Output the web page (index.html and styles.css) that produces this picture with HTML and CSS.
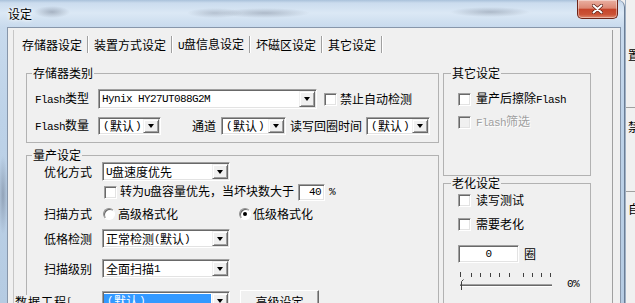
FILE: index.html
```html
<!doctype html>
<html>
    <head>
        <meta charset=utf-8>
        <title>设定</title>
        <link rel="stylesheet" href="styles.css">
    </head>
    <body>
        <div class="screen">
            <div class="dlg">
                <div class="titlebar">
                    <span class="title">设定</span>
                    <span class="close">
                        <svg width="11" height="10" viewBox="0 0 11 10">
                            <path d="M1.5 1.5L9.5 8.5M9.5 1.5L1.5 8.5" stroke="#5a1a10" stroke-width="3.4" stroke-linecap="round"/>
                            <path d="M1.5 1.5L9.5 8.5M9.5 1.5L1.5 8.5" stroke="#fff" stroke-width="2" stroke-linecap="round"/>
                        </svg>
                    </span>
                </div>
                <div class="client">
                    <div class="tabctl">
                        <div class="tabs">
                            <span class="tab on">存储器设定</span><span class="sep"></span>
                            <span class="tab">装置方式设定</span><span class="sep"></span>
                            <span class="tab"><span class="en">U</span>盘信息设定</span><span class="sep"></span>
                            <span class="tab">坏磁区设定</span><span class="sep"></span>
                            <span class="tab">其它设定</span><span class="sep"></span>
                        </div>
                        <div class="pages">
                            <div class="col col-l">
                                <fieldset class="grp grp-type">
                                    <legend>存储器类别</legend>
                                    <div class="gbody">
                                        <div class="row r-flash">
                                            <span class="lbl lbl-type"><span class="en">Flash</span>类型</span>
                                            <span class="combo c-type"><span class="val en">Hynix HY27UT088G2M</span><span class="drop"></span></span>
                                            <span class="cb cb-auto"></span><span class="cbt">禁止自动检测</span>
                                        </div>
                                        <div class="row r-count">
                                            <span class="lbl lbl-type"><span class="en">Flash</span>数量</span>
                                            <span class="combo c-def"><span class="val"><span class="en par">(</span>默认<span class="en par">)</span></span><span class="drop"></span></span>
                                            <span class="lbl lbl-ch">通道</span>
                                            <span class="combo c-ch"><span class="val"><span class="en par">(</span>默认<span class="en par">)</span></span><span class="drop"></span></span>
                                            <span class="lbl lbl-rw">读写回圈时间</span>
                                            <span class="combo c-rw"><span class="val"><span class="en par">(</span>默认<span class="en par">)</span></span><span class="drop"></span></span>
                                        </div>
                                    </div>
                                </fieldset>
                                <fieldset class="grp grp-prod">
                                    <legend>量产设定</legend>
                                    <div class="gbody">
                                        <div class="row r-a">
                                            <span class="lbl lbl-p">优化方式</span>
                                            <span class="combo c-p"><span class="val"><span class="en">U</span>盘速度优先</span><span class="drop"></span></span>
                                        </div>
                                        <div class="row r-b">
                                            <span class="cb cb-cap"></span><span class="cbt">转为<span class="en">U</span>盘容量优先，当坏块数大于</span>
                                            <span class="edit edit-40 en">40</span>
                                            <span class="pct-sign en">%</span>
                                        </div>
                                        <div class="row r-c">
                                            <span class="lbl lbl-p">扫描方式</span>
                                            <span class="rb rb-hi"></span><span class="cbt">高级格式化</span>
                                            <span class="rb rb-lo on"></span><span class="cbt rbt-lo">低级格式化</span>
                                        </div>
                                        <div class="row r-d">
                                            <span class="lbl lbl-p">低格检测</span>
                                            <span class="combo c-p"><span class="val">正常检测<span class="en">(</span>默认<span class="en">)</span></span><span class="drop"></span></span>
                                        </div>
                                        <div class="row r-e">
                                            <span class="lbl lbl-p">扫描级别</span>
                                            <span class="combo c-p"><span class="val">全面扫描<span class="en">1</span></span><span class="drop"></span></span>
                                        </div>
                                        <div class="row r-f">
                                            <span class="lbl lbl-glitch">数据工程[—</span>
                                            <span class="combo c-p c-sel"><span class="val"><span class="en par">(</span>默认<span class="en par">)</span></span><span class="drop"></span></span>
                                            <span class="btn">高级设定</span>
                                        </div>
                                    </div>
                                </fieldset>
                            </div>
                            <div class="col col-r">
                                <fieldset class="grp grp-r grp-other">
                                    <legend>其它设定</legend>
                                    <div class="gbody">
                                        <div class="row r-o1">
                                            <span class="cb"></span><span class="cbt cbt-r">量产后擦除<span class="en">Flash</span></span>
                                        </div>
                                        <div class="row r-o2 dis">
                                            <span class="cb dis-box"></span><span class="cbt cbt-r"><span class="en">Flash</span>筛选</span>
                                        </div>
                                    </div>
                                </fieldset>
                                <fieldset class="grp grp-r grp-aging">
                                    <legend>老化设定</legend>
                                    <div class="gbody">
                                        <div class="row r-g1">
                                            <span class="cb"></span><span class="cbt cbt-r">读写测试</span>
                                        </div>
                                        <div class="row r-g2">
                                            <span class="cb"></span><span class="cbt cbt-r">需要老化</span>
                                        </div>
                                        <div class="row r-g3">
                                            <span class="edit edit-0 en">0</span>
                                            <span class="lbl lbl-quan">圈</span>
                                        </div>
                                        <div class="row r-g4">
                                            <svg class="slider" width="100" height="24" viewBox="0 0 100 24">
                                                <path d="M2.5 4v5M13.5 5v4M22.5 5v4M32.5 5v4M41.5 5v4M51.5 5v4M65.5 5v4M74.5 5v4M83.5 5v4M92.5 5v4" stroke="#404040"/>
                                                <path d="M2 16.5h92" stroke="#a0a0a0"/>
                                                <path d="M2 17.5h92" stroke="#696969"/>
                                                <path d="M2 18.5h92" stroke="#fff"/>
                                                <path d="M5.5 11.5L3.5 13.5V22" stroke="#404040" fill="none"/>
                                            </svg>
                                            <span class="pct en">0%</span>
                                        </div>
                                    </div>
                                </fieldset>
                            </div>
                        </div>
                    </div>
                </div>
            </div>
            <div class="behind">
                <span class="bg-glyph g1">置</span>
                <span class="bg-line l1"></span>
                <span class="bg-glyph g2">禁</span>
                <span class="bg-line l2"></span>
                <span class="bg-glyph g3">自</span>
            </div>
        </div>
    </body>
</html>
```

FILE: styles.css
```css
* {
    box-sizing: border-box;
}

html, body {
    margin: 0;
}

body {
    width: 635px;
    height: 303px;
    overflow: hidden;
    font-family: "Noto Sans CJK SC", "Liberation Sans", sans-serif;
    font-size: 12px;
    line-height: 14px;
    color: #000;
    background: #f0f0f0;
}

/* SimSun-like half width latin */
.en {
    font-family: "Liberation Mono", monospace;
    font-size: 11px;
    letter-spacing: -0.6px;
}

.par {
    padding: 0 1px;
}

.screen {
    display: flex;
    height: 303px;
}

/* window frame (aero glass) */
.dlg {
    flex: none;
    width: 625px;
    height: 303px;
    display: flex;
    flex-direction: column;
    padding: 0 3px 0 7px;
    border-right: 1px solid #6a7d95;
    border-top-right-radius: 7px;
    background:
        radial-gradient(ellipse 18px 6px at 52px 12px, rgba(70, 80, 100, .35), transparent),
        radial-gradient(ellipse 28px 5px at 215px 13px, rgba(70, 80, 100, .25), transparent),
        radial-gradient(ellipse 45px 5px at 265px 13px, rgba(70, 80, 100, .3), transparent),
        radial-gradient(ellipse 40px 5px at 490px 12px, rgba(70, 80, 100, .3), transparent),
        radial-gradient(ellipse 5px 40px at 3px 195px, rgba(70, 80, 100, .35), transparent),
        linear-gradient(#a9c1da 0, #cbdcee 3px, #dbe8f5 13px, #c8daed 27px, #bdd2e8 120px, #b5cbe2 303px);
}

.titlebar {
    flex: none;
    height: 27px;
    display: flex;
    align-items: flex-start;
    padding-left: 1px;
}

.title {
    margin-top: 7px;
    text-shadow: 0 0 5px #fff, 0 0 3px #fff;
}

.close {
    margin: 0 3px 0 auto;
    width: 41px;
    height: 19px;
    display: flex;
    align-items: center;
    justify-content: center;
    border: 1px solid #6e2418;
    border-top: 0;
    border-radius: 0 0 5px 5px;
    background: linear-gradient(#eab0a2, #dc8874 45%, #c6452b 52%, #cb5236 80%, #df8a6f);
    box-shadow: inset 0 0 0 1px rgba(255, 255, 255, .4);
}

.client {
    flex: 1;
    display: flex;
    flex-direction: column;
    border: 1px solid #8796aa;
    border-bottom: 0;
    background: #f0f0f0;
    padding: 2px 7px 0 5px;
    min-height: 0;
}

.tabctl {
    flex: 1;
    display: flex;
    flex-direction: column;
    border-left: 1px solid #c6c6c6;
    border-right: 1px solid #a0a0a0;
    min-height: 0;
}

.tabs {
    flex: none;
    height: 27px;
    display: flex;
    align-items: center;
    padding: 2px 0 0 4px;
}

.tab {
    padding: 0 4px;
}

.sep {
    width: 2px;
    height: 17px;
    margin: 0 1px;
    border-left: 1px solid #a0a0a0;
    border-right: 1px solid #fff;
}

.pages {
    flex: 1;
    display: flex;
    gap: 4px;
    padding: 9px 0 0 12px;
}

.col {
    display: flex;
    flex-direction: column;
}

.col-l {
    width: 413px;
}

.col-r {
    width: 148px;
}

/* group boxes */
.grp {
    margin: 0;
    padding: 0;
    min-width: 0;
    border: 1px solid #b2b2b2;
}

.grp legend {
    margin-left: 5px;
    padding: 0 1px;
    line-height: 14px;
}

.grp-r legend {
    margin-left: 7px;
}

.grp-type {
    height: 77px;
}

.grp-prod {
    flex: 1;
    margin-top: 5px;
}

.grp-other {
    height: 110px;
}

.grp-aging {
    flex: 1;
}

.grp-type .gbody {
    padding-left: 8px;
}

.grp-prod .gbody {
    padding-left: 17px;
}

.grp-r .gbody {
    padding-left: 14px;
}

.row {
    display: flex;
    align-items: center;
    white-space: nowrap;
}

.lbl-type {
    width: 63px;
}

.lbl-p {
    width: 58px;
}

.lbl-ch {
    margin-left: 31px;
}

.lbl-rw {
    margin-left: 4px;
}

.lbl-quan {
    margin-left: 5px;
}

.lbl-glitch {
    width: 87px;
    margin-left: -29px;
    background: #f0f0f0;
    letter-spacing: 1px;
}

/* combo boxes */
.combo {
    display: inline-flex;
    align-self: stretch;
    padding: 1px;
    border: 1px solid;
    border-color: #a0a0a0 #fff #fff #a0a0a0;
    box-shadow: inset 1px 1px 0 #696969, inset -1px -1px 0 #e3e3e3;
    background: #fff;
}

.combo .val {
    flex: 1;
    display: flex;
    align-items: center;
    padding-left: 2px;
}

.drop {
    width: 16px;
    flex: none;
    display: flex;
    align-items: center;
    justify-content: center;
    background: #f0f0f0;
    border: 1px solid;
    border-color: #f0f0f0 #696969 #696969 #f0f0f0;
    box-shadow: inset 1px 1px 0 #fff, inset -1px -1px 0 #a0a0a0;
}

.drop::after {
    content: "";
    border-left: 3.5px solid transparent;
    border-right: 3.5px solid transparent;
    border-top: 4px solid #000;
}

.c-type {
    width: 219px;
}

.c-def {
    width: 63px;
}

.c-ch {
    width: 65px;
    margin-left: 5px;
}

.c-rw {
    width: 64px;
    margin-left: 4px;
}

.c-p {
    width: 128px;
}

.c-sel .val {
    background: #3399ff;
    color: #fff;
    margin: 1px 1px 1px 0;
}

/* check boxes and radios */
.cb {
    flex: none;
    width: 13px;
    height: 13px;
    border: 1px solid;
    border-color: #a0a0a0 #fff #fff #a0a0a0;
    box-shadow: inset 1px 1px 0 #696969, inset -1px -1px 0 #e3e3e3;
    background: #fff;
}

.cb.dis-box {
    background: #f0f0f0;
}

.cbt {
    margin-left: 3px;
}

.cbt-r {
    margin-left: 5px;
}

.dis .cbt {
    color: #a0a0a0;
    text-shadow: 1px 1px 0 #fff;
}

.cb-auto {
    margin-left: 7px;
}

.cb-cap {
    margin-left: 60px;
}

.rb {
    flex: none;
    position: relative;
    width: 12px;
    height: 12px;
    border-radius: 50%;
    border: 1px solid;
    border-color: #909090 #fff #fff #909090;
    box-shadow: inset 1px 1px 0 #696969;
    background: #fff;
}

.rb.on::after {
    content: "";
    position: absolute;
    left: 3px;
    top: 3px;
    width: 4px;
    height: 4px;
    border-radius: 50%;
    background: #000;
}

.rb-hi {
    margin-left: 1px;
}

.rb-lo {
    margin-left: 61px;
}

.rbt-lo {
    margin-left: 2px;
}

/* edit boxes */
.edit {
    display: flex;
    align-items: center;
    height: 17px;
    padding: 0 3px;
    border: 1px solid;
    border-color: #a0a0a0 #fff #fff #a0a0a0;
    box-shadow: inset 1px 1px 0 #696969, inset -1px -1px 0 #e3e3e3;
    background: #fff;
}

.edit-40 {
    width: 27px;
    margin-left: 4px;
    justify-content: flex-end;
}

.edit-0 {
    width: 61px;
    height: 18px;
    justify-content: center;
}

.pct-sign {
    margin-left: 4px;
}

/* rows of the groups */
.r-flash {
    height: 20px;
    margin-top: 9px;
}

.r-count {
    height: 18px;
    margin-top: 8px;
}

.r-a {
    height: 19px;
}

.r-b {
    height: 18px;
    margin-top: 2px;
}

.r-c {
    height: 18px;
    margin-top: 4px;
}

.r-d {
    height: 19px;
    margin-top: 6px;
}

.r-e {
    height: 19px;
    margin-top: 11px;
}

.r-f {
    height: 23px;
    margin-top: 12px;
    align-items: flex-start;
}

.r-f .lbl {
    margin-top: 5px;
}

.r-f .combo {
    height: 19px;
    margin-top: 1px;
}

.btn {
    width: 79px;
    height: 23px;
    margin-left: 10px;
    display: flex;
    align-items: center;
    justify-content: center;
    border: 1px solid;
    border-color: #fff #696969 #696969 #fff;
    box-shadow: inset -1px -1px 0 #a0a0a0;
    background: #f0f0f0;
}

.r-o1 {
    height: 18px;
    margin-top: 10px;
}

.r-o2 {
    height: 18px;
    margin-top: 5px;
}

.r-g1 {
    height: 18px;
    margin-top: 1px;
}

.r-g2 {
    height: 18px;
    margin-top: 6px;
}

.r-g3 {
    height: 18px;
    margin-top: 12px;
}

.r-g4 {
    height: 24px;
    margin-top: 5px;
    align-items: flex-start;
}

.pct {
    margin-left: 9px;
    padding-top: 9px;
}

/* window behind the dialog */
.behind {
    flex: 1;
    display: flex;
    flex-direction: column;
    background: #f0f0f0;
    border-left: 1px solid #9fb0c4;
    overflow: hidden;
    white-space: nowrap;
}

.bg-glyph {
    padding-left: 2px;
}

.bg-line {
    height: 1px;
    background: #a0a0a0;
}

.g1 {
    margin-top: 48px;
}

.l1 {
    margin-top: 45px;
}

.g2 {
    margin-top: 12px;
}

.l2 {
    margin-top: 57px;
}

.g3 {
    margin-top: 10px;
}
```
